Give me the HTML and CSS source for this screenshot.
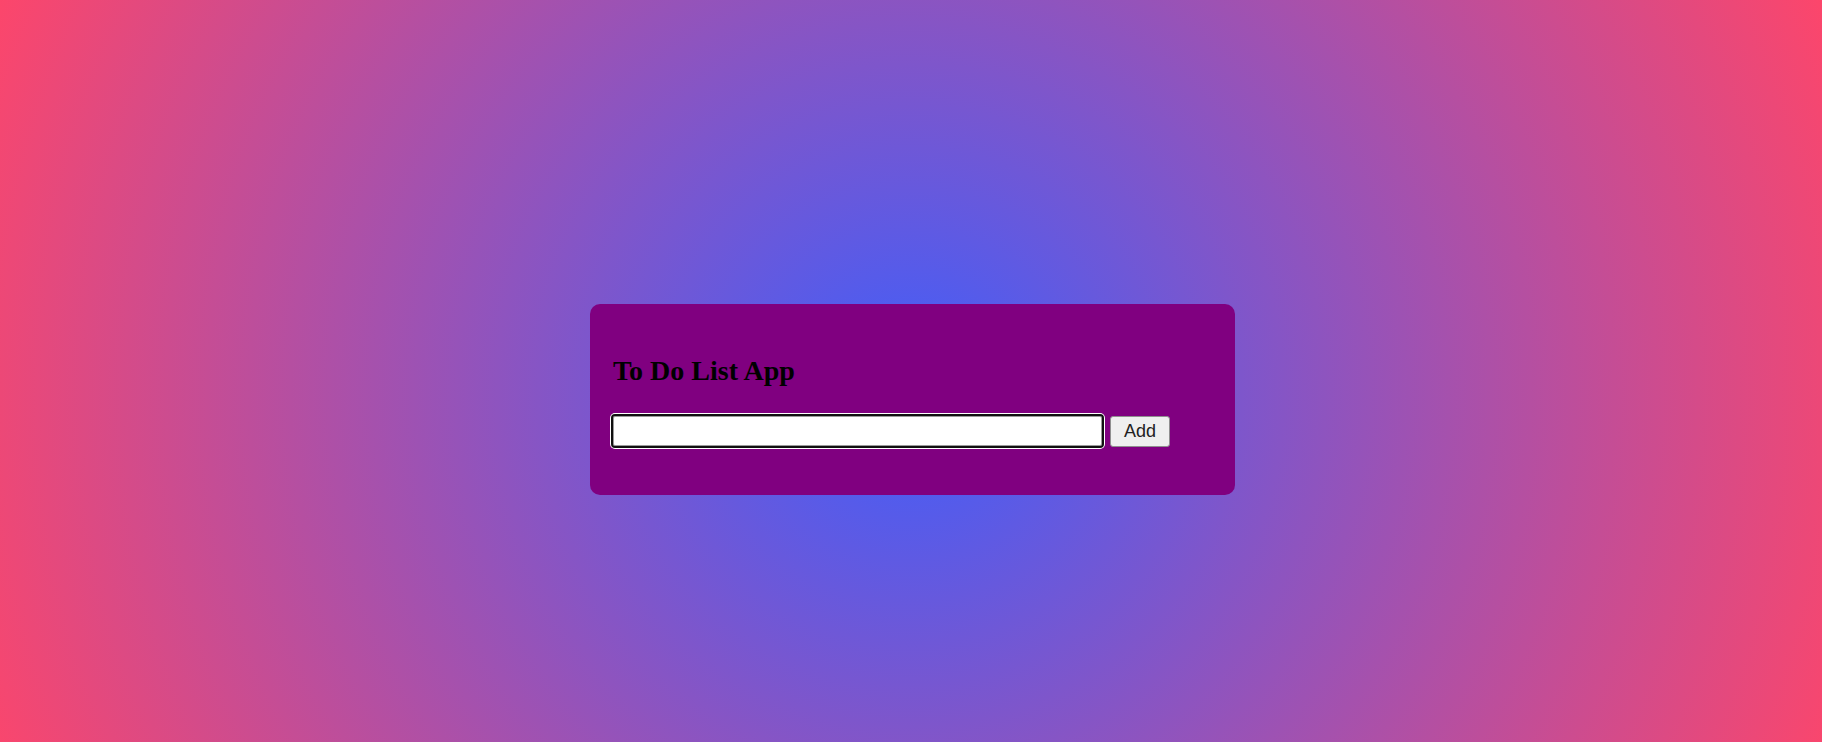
FILE: index.html
```html
<!DOCTYPE html>
<html lang="en">
<head>
<meta charset="utf-8">
<title>To Do List App</title>
<link rel="stylesheet" href="styles.css">
</head>
<body>
  <main class="todo-card">
    <h2 class="todo-title">To Do List App</h2>
    <div class="todo-row">
      <input class="todo-input" type="text" autofocus>
      <button class="todo-add" type="button">Add</button>
    </div>
  </main>
</body>
</html>
```
FILE: styles.css
```css
html, body {
  margin: 0;
  padding: 0;
}

body {
  min-height: 100vh;
  box-sizing: border-box;
  display: flex;
  justify-content: center;
  align-items: flex-start;
  padding-top: 304px;
  background: radial-gradient(circle at 50% 395px, rgb(63, 94, 251) 0%, rgb(252, 70, 107) 100%);
  font-family: "Liberation Serif", "Times New Roman", serif;
}

.todo-card {
  width: 645px;
  box-sizing: border-box;
  padding: 51px 21px 47px 21px;
  background: #800080;
  border-radius: 10px;
  margin-left: 3px;
}

.todo-title {
  margin: 0 0 27px 0;
  padding-left: 2px;
  font-size: 28px;
  font-weight: bold;
  color: #000;
  line-height: normal;
}

.todo-row {
  display: flex;
  align-items: center;
  gap: 6px;
}

.todo-input {
  width: 493px;
  height: 34px;
  box-sizing: border-box;
  padding: 0 4px;
  border: 2px solid #101010;
  border-radius: 4px;
  box-shadow: 0 0 0 1px #ffffff, inset 0 0 0 1px #9a9a9a;
  background: #fff;
  outline: none;
  font-family: "Liberation Sans", Arial, sans-serif;
  font-size: 18px;
  caret-color: #000;
}

.todo-add {
  height: 31px;
  box-sizing: border-box;
  padding: 0 13px;
  border: 1px solid #8f8f8f;
  border-radius: 3px;
  background: #efefef;
  color: #222;
  font-family: "Liberation Sans", Arial, sans-serif;
  font-size: 18px;
  line-height: 1;
}
```
